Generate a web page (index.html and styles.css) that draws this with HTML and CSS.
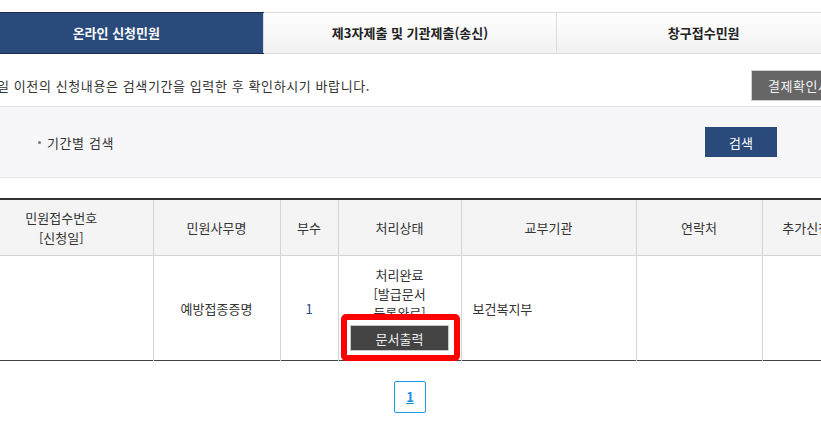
FILE: index.html
```html
<!DOCTYPE html>
<html lang="ko">
<head>
  <meta charset="UTF-8">
  <meta name="viewport" content="width=device-width, initial-scale=1.0">
  <title>신청민원 조회</title>
  <link rel="stylesheet" href="styles.css">
</head>
<body>
  <div class="wrap">
    <ul class="tabs">
      <li class="tab active">온라인 신청민원</li>
      <li class="tab">제3자제출 및 기관제출(송신)</li>
      <li class="tab">창구접수민원</li>
    </ul>

    <div class="notice-row">
      <p class="notice">일 이전의 신청내용은 검색기간을 입력한 후 확인하시기 바랍니다.</p>
      <button class="btn-gray">결제확인서</button>
    </div>

    <div class="search-box">
      <span class="search-label">기간별 검색</span>
      <button class="btn-navy">검색</button>
    </div>

    <table class="list">
      <colgroup>
        <col style="width: 183px">
        <col style="width: 127px">
        <col style="width: 58px">
        <col style="width: 123px">
        <col style="width: 175px">
        <col style="width: 126px">
        <col style="width: 88px">
      </colgroup>
      <thead>
        <tr>
          <th>민원접수번호<br>[신청일]</th>
          <th>민원사무명</th>
          <th>부수</th>
          <th>처리상태</th>
          <th>교부기관</th>
          <th>연락처</th>
          <th>추가신청</th>
        </tr>
      </thead>
      <tbody>
        <tr>
          <td></td>
          <td>예방접종증명</td>
          <td class="count">1</td>
          <td class="status">
            <div class="status-text">처리완료<br>[발급문서<br>등록완료]</div>
            <span class="mark"><button class="btn-print">문서출력</button></span>
          </td>
          <td class="left">보건복지부</td>
          <td></td>
          <td></td>
        </tr>
      </tbody>
    </table>

    <div class="paging">
      <a href="#" class="page current">1</a>
    </div>
  </div>
</body>
</html>
```

FILE: styles.css
```css
body {
  margin: 0;
  overflow: hidden;
  font-family: "Noto Sans CJK KR", "Noto Sans", sans-serif;
  font-size: 13px;
  color: #333;
  background: #fff;
}
.wrap {
  width: 880px;
  margin-left: -30px;
  padding-top: 12px;
}

/* tabs */
.tabs {
  display: flex;
  list-style: none;
  margin: 0;
  padding: 0;
  border-top: 1px solid #dcdcdc;
  border-bottom: 1px solid #dcdcdc;
}
.tab {
  flex: 1;
  height: 40px;
  line-height: 40px;
  text-align: center;
  font-weight: bold;
  color: #222;
  background: linear-gradient(#fff, #f1f1f1);
  border-left: 1px solid #dcdcdc;
}
.tab:first-child {
  border-left: none;
}
.tab.active {
  background: #294a7b;
  color: #fff;
  outline: 1px solid #1b2f52;
}

/* notice */
.notice-row {
  display: flex;
  align-items: center;
  justify-content: space-between;
  margin-top: 16px;
  padding-left: 27px;
}
.notice {
  margin: 0;
  color: #333;
  letter-spacing: 0.6px;
}
.btn-gray {
  height: 31px;
  width: 99px;
  padding: 0 0 0 16px;
  text-align: left;
  white-space: nowrap;
  overflow: hidden;
  background: #666;
  color: #f2f2f2;
  border: 1px solid #d0d0d0;
  font-family: inherit;
  font-size: 13px;
  letter-spacing: 0.5px;
}

/* search */
.search-box {
  display: flex;
  align-items: center;
  justify-content: space-between;
  height: 70px;
  margin-top: 5px;
  padding: 0 73px 0 68px;
  background: #f7f7f9;
  border-top: 1px solid #e4e4e8;
  border-bottom: 1px solid #e4e4e8;
}
.search-label {
  position: relative;
  padding-left: 9px;
  color: #333;
  letter-spacing: 0.6px;
}
.search-label::before {
  content: "";
  position: absolute;
  left: 0;
  top: 8px;
  width: 3px;
  height: 3px;
  border-radius: 50%;
  background: #777;
}
.btn-navy {
  width: 72px;
  height: 30px;
  background: #294a7b;
  color: #fff;
  border: none;
  font-family: inherit;
  font-size: 13px;
}

/* table */
.list {
  width: 880px;
  margin-top: 20px;
  table-layout: fixed;
  border-collapse: collapse;
  border-top: 2px solid #333;
  border-bottom: 1px solid #444;
}
.list th {
  height: 55px;
  padding: 0;
  font-weight: normal;
  line-height: 20px;
  background: #f4f4f4;
  border-left: 1px solid #d4d4d4;
  border-bottom: 1px solid #d4d4d4;
}
.list td {
  height: 104px;
  padding: 0;
  text-align: center;
  vertical-align: middle;
  border-left: 1px solid #d4d4d4;
}
.list th:first-child,
.list td:first-child {
  border-left: none;
}
.list td.count {
  color: #2a4a8c;
}
.list td.left {
  text-align: left;
  padding-left: 11px;
}
.status-text {
  line-height: 19px;
}
.mark {
  position: relative;
  display: inline-block;
  margin-top: 3px;
  vertical-align: top;
}
.mark::before {
  content: "";
  position: absolute;
  top: -11px;
  left: -9px;
  right: -11px;
  bottom: -10px;
  border: 6px solid #f00;
  border-radius: 5px;
  background: #fff;
}
.btn-print {
  position: relative;
  display: block;
  width: 99px;
  height: 26px;
  padding: 0;
  background: #444;
  color: #f0f0f0;
  border: 1px solid #c8c8c8;
  font-family: inherit;
  font-size: 13px;
}

/* paging */
.paging {
  display: flex;
  justify-content: center;
  margin-top: 20px;
}
.page {
  display: block;
  width: 30px;
  height: 30px;
  line-height: 30px;
  text-align: center;
  border: 1px solid #1a9be6;
  border-radius: 2px;
  color: #1a8fdc;
  font-weight: bold;
  text-decoration: underline;
}
```
